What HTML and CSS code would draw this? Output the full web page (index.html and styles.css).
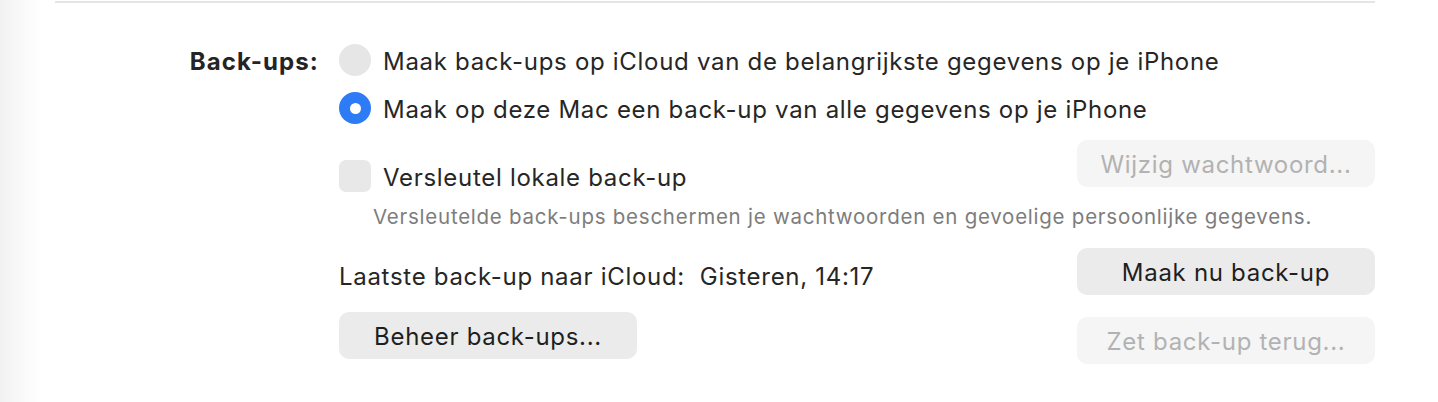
FILE: index.html
```html
<!DOCTYPE html>
<html lang="nl">
<head>
<meta charset="utf-8">
<title>Back-ups</title>
<link rel="stylesheet" href="styles.css">
</head>
<body>
<div class="page">
  <div class="divider"></div>
  <div class="settings">
    <div class="label">Back-ups:</div>
    <div class="content">
      <div class="options">
        <div class="option">
          <span class="radio"></span>
          <span class="text">Maak back-ups op iCloud van de belangrijkste gegevens op je iPhone</span>
        </div>
        <div class="option">
          <span class="radio checked"></span>
          <span class="text">Maak op deze Mac een back-up van alle gegevens op je iPhone</span>
        </div>
      </div>
      <div class="row row-encrypt">
        <div class="option check-option">
          <span class="checkbox"></span>
          <span class="text">Versleutel lokale back-up</span>
        </div>
        <button class="btn disabled">Wijzig wachtwoord...</button>
      </div>
      <div class="hint">Versleutelde back-ups beschermen je wachtwoorden en gevoelige persoonlijke gegevens.</div>
      <div class="row row-last">
        <div class="text last">Laatste back-up naar iCloud:&nbsp; Gisteren, 14:17</div>
        <button class="btn">Maak nu back-up</button>
      </div>
      <div class="row row-manage">
        <button class="btn">Beheer back-ups...</button>
        <button class="btn disabled restore">Zet back-up terug...</button>
      </div>
    </div>
  </div>
</div>
</body>
</html>
```

FILE: styles.css
```css
html, body {
  margin: 0;
  padding: 0;
}
body {
  background: linear-gradient(to right, #f1f1f1 0, #fafafa 25px, #ffffff 42px);
  font-family: Inter, "Noto Sans", "Liberation Sans", sans-serif;
  color: #262626;
  height: 402px;
  overflow: hidden;
}
.page {
  width: 1438px;
}
.divider {
  margin: 1px 0 0 55px;
  width: 1320px;
  height: 2px;
  background: #e5e5e5;
}
.settings {
  display: grid;
  grid-template-columns: 319px 1036px;
  column-gap: 20px;
  margin-top: 41px;
}
.label {
  text-align: right;
  font-weight: 700;
  font-size: 24px;
  letter-spacing: 1.1px;
  line-height: 28px;
  padding-top: 4px;
  color: #242424;
}
.content {
  display: flex;
  flex-direction: column;
}
.options {
  display: flex;
  flex-direction: column;
  gap: 16px;
}
.option {
  display: flex;
  align-items: center;
  gap: 12px;
  height: 32px;
}
.text {
  font-size: 24px;
  letter-spacing: 0.7px;
  line-height: 28px;
  padding-top: 4px;
  color: #262626;
  white-space: nowrap;
}
.radio {
  width: 32px;
  height: 32px;
  border-radius: 50%;
  background: #e6e6e6;
  flex: none;
  display: flex;
  align-items: center;
  justify-content: center;
}
.radio.checked {
  background: #2d7cf6;
}
.radio.checked::after {
  content: "";
  width: 11px;
  height: 11px;
  border-radius: 50%;
  background: #ffffff;
}
.checkbox {
  width: 32px;
  height: 32px;
  border-radius: 7px;
  background: #e8e8e8;
  flex: none;
}
.row {
  display: flex;
  justify-content: space-between;
  align-items: flex-start;
}
.row-encrypt {
  margin-top: 16px;
}
.check-option {
  margin-top: 20px;
}
.btn {
  width: 298px;
  height: 47px;
  border: 0;
  border-radius: 10px;
  background: #ebebeb;
  font-family: inherit;
  font-size: 24px;
  letter-spacing: 0.7px;
  color: #1f1f1f;
  padding: 2px 0 0;
  flex: none;
}
.btn.disabled {
  background: #f5f5f5;
  color: #b2b2b2;
}
.hint {
  margin: 12px 0 0 34px;
  font-size: 20.5px;
  letter-spacing: 0.75px;
  line-height: 24px;
  padding-top: 1px;
  color: #7d7d7d;
  white-space: nowrap;
}
.row-last {
  margin-top: 19px;
}
.last {
  margin-top: 11px;
}
.row-manage {
  margin-top: 17px;
}
.restore {
  margin-top: 5px;
}
```
